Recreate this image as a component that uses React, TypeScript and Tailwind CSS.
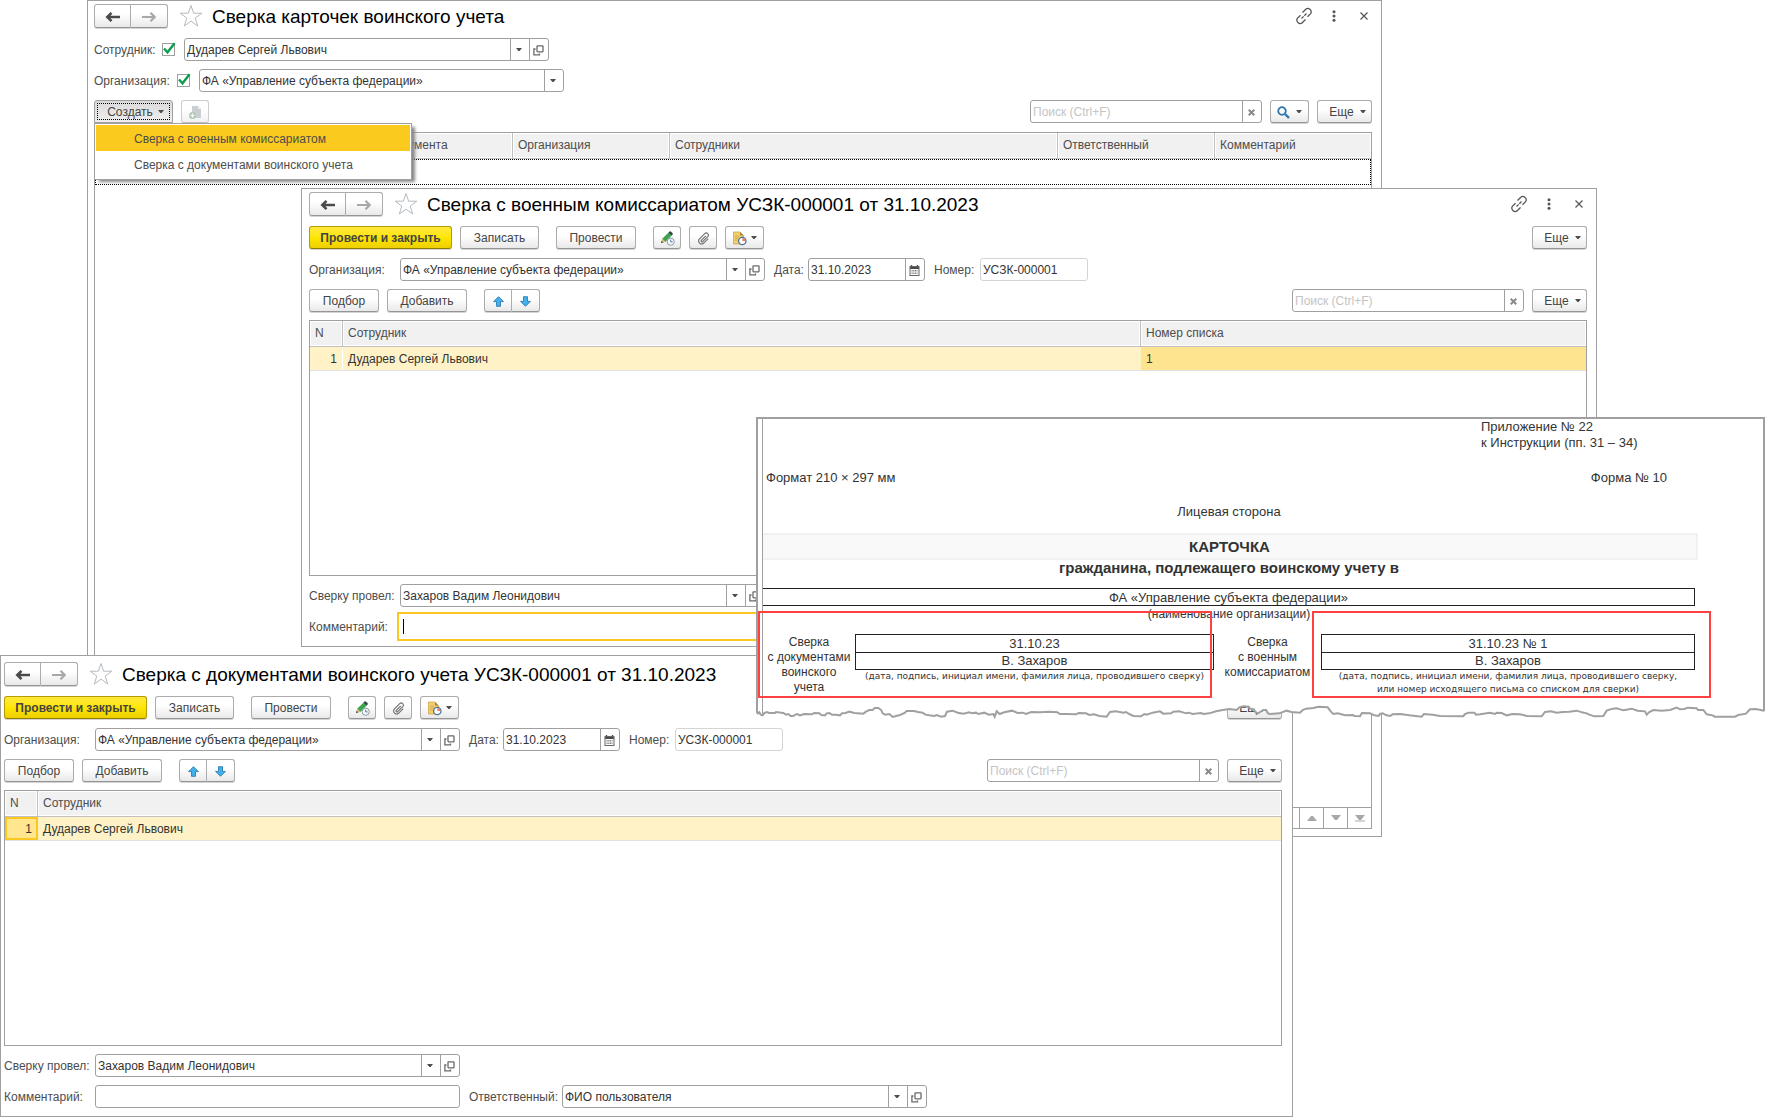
import type { ReactNode } from "react";
import clsx from "clsx";

/* ---------- icons ---------- */

const Caret = () => (
  <svg width="6" height="4" viewBox="0 0 6 4" className="shrink-0" aria-hidden="true">
    <path d="M0 0h6L3.6 3H2.4z" fill="#4d4d4d" />
  </svg>
);

const ArrowIcon = ({ back }: { back?: boolean }) => (
  <svg width="16" height="12" viewBox="0 0 16 12" aria-hidden="true">
    {back ? (
      <path d="M6.500 1.800 2.300 6l4.200 4.200M2.300 6H15" fill="none" stroke="#4a4a4a" strokeWidth="2.600" />
    ) : (
      <path d="M9.500 1.800 13.700 6l-4.200 4.200M13.700 6H1" fill="none" stroke="#a8a8a8" strokeWidth="2.200" />
    )}
  </svg>
);

const StarIcon = () => (
  <svg width="24" height="24" viewBox="0 0 24 24" className="shrink-0" aria-hidden="true">
    <path
      d="M12 1.500 14.600 9.200h8.200l-6.600 4.900 2.500 7.900L12 17.200 5.300 22l2.500-7.900-6.600-4.900h8.200z"
      fill="#fff"
      stroke="#b4bac0"
      strokeWidth="1"
    />
  </svg>
);

const LinkIcon = () => (
  <svg width="18" height="18" viewBox="0 0 18 18" fill="none" stroke="#555" strokeWidth="1.300" aria-hidden="true">
    <path d="M7.500 5.500 10.800 2.300a2.800 2.800 0 0 1 4 0l.6.600a2.800 2.800 0 0 1 0 4L12.500 9.800M10.500 12.500l-3.300 3.200a2.800 2.800 0 0 1-4 0l-.6-.6a2.800 2.800 0 0 1 0-4L5.500 8.200" />
    <path d="M6.500 11.500l5-5" strokeDasharray="3 1" />
  </svg>
);

const DotsIcon = () => (
  <svg width="4" height="12" viewBox="0 0 4 12" fill="#555" aria-hidden="true">
    <circle cx="2" cy="1.700" r="1.500" />
    <circle cx="2" cy="6" r="1.500" />
    <circle cx="2" cy="10.300" r="1.500" />
  </svg>
);

const CloseIcon = () => (
  <svg width="8" height="8" viewBox="0 0 8 8" stroke="#555" strokeWidth="1.200" aria-hidden="true">
    <path d="M.5.500l7 7M7.500.500l-7 7" />
  </svg>
);

const ClearIcon = () => (
  <svg width="7" height="7" viewBox="0 0 7 7" stroke="#8a8a8a" strokeWidth="2" aria-hidden="true">
    <path d="M.7.700l5.600 5.600M6.300.700.7 6.300" />
  </svg>
);

const OpenIcon = () => (
  <svg width="11" height="11" viewBox="0 0 11 11" fill="none" stroke="#6a6a6a" strokeWidth="1.300" aria-hidden="true">
    <rect x="4" y=".8" width="6" height="6" rx=".5" />
    <path d="M2.500 4H.9v5.800h5.600V8.400" />
  </svg>
);

const CalendarIcon = () => (
  <svg width="11" height="11" viewBox="0 0 11 11" aria-hidden="true">
    <path d="M1 1h9v3H1z" fill="#4a4a4a" />
    <path d="M2.500 0v2M8.500 0v2" stroke="#4a4a4a" strokeWidth="1.400" />
    <rect x="1" y="1.500" width="9" height="9" fill="none" stroke="#666" />
    <path d="M2.500 5.500h6M2.500 7h6M2.500 8.500h6" stroke="#777" strokeWidth=".9" strokeDasharray="1.200 .5" />
  </svg>
);

const SearchIcon = () => (
  <svg width="13" height="13" viewBox="0 0 13 13" fill="none" stroke="#2f78ad" aria-hidden="true">
    <circle cx="5" cy="5" r="3.800" strokeWidth="1.800" />
    <path d="M8 8l4 4" strokeWidth="2.400" />
  </svg>
);

const CopyIcon = () => (
  <svg width="15" height="15" viewBox="0 0 15 15" aria-hidden="true">
    <path d="M4 1h6l3 3v9H4z" fill="#a9b0b5" />
    <path d="M10 1v3h3z" fill="#dfe3e5" />
    <circle cx="4.500" cy="10.500" r="3.500" fill="#7da88a" />
    <path d="M4.500 8.500v4M2.500 10.500h4" stroke="#fff" strokeWidth="1.200" />
  </svg>
);

const PencilIcon = () => (
  <svg width="15" height="15" viewBox="0 0 15 15" aria-hidden="true">
    <path d="M1 12l1.500-4.500L8.300 1.700l3.200 3L5.500 10.800z" fill="#3da34c" />
    <path d="M8.300 1.700 9.600.6q.7-.5 1.300 0L12.600 2.300q.5.600 0 1.200L11.500 4.700z" fill="#2c4b3a" />
    <path d="M1 12l1.500-4.500 3 3.300z" fill="#e0b787" />
    <path d="M1 12l.7-2.100 1.400 1.400z" fill="#333" />
    <circle cx="10.700" cy="10.700" r="3.600" fill="#f4f8fb" stroke="#8a9bab" />
    <path d="M10.700 8.700v2.200h2" fill="none" stroke="#5a7a99" />
  </svg>
);

const ClipIcon = () => (
  <svg width="13" height="13" viewBox="0 0 13 13" fill="none" stroke="#707070" strokeWidth="1.100" aria-hidden="true">
    <path d="M8.800 3.800 4.300 8.300a1 1 0 0 0 1.400 1.400l5-5a2.100 2.100 0 0 0-3-3L2.300 7.100a3 3 0 0 0 4.200 4.200l4.700-4.700" />
  </svg>
);

const ReportIcon = () => (
  <svg width="15" height="15" viewBox="0 0 15 15" aria-hidden="true">
    <path d="M1.500 1h6.500l3.500 3.500V13h-10z" fill="#f2cf70" stroke="#cfa544" strokeWidth=".8" />
    <path d="M8 1v3.500h3.500z" fill="#a9853a" />
    <path d="M3 5h4M3 7h4M3 9h3" stroke="#c9a24a" strokeWidth=".8" />
    <circle cx="10.300" cy="10" r="3.700" fill="#fff" stroke="#4f749c" strokeWidth="1.300" />
    <path d="M10.300 7v3h3a3 3 0 0 0-3-3z" fill="#e6806a" />
  </svg>
);

const MoveIcon = ({ down }: { down?: boolean }) => (
  <svg width="11" height="11" viewBox="0 0 11 11" className={clsx(down && "rotate-180")} aria-hidden="true">
    <path d="M5.500.700 10.400 5.600H7.500v4.700h-4V5.600H.6z" fill="#43b0ee" stroke="#2b7db0" strokeWidth=".9" />
  </svg>
);

const ScrollIcon = ({ up, end }: { up?: boolean; end?: boolean }) => (
  <svg width="10" height="7" viewBox="0 0 10 7" fill="#a8a8a8" aria-hidden="true">
    {up ? <path d="M0 6h10L6 1H4z" /> : <path d="M0 0h10L6 5H4z" />}
    {end && <path d="M0 5.500h10v1H0z" />}
  </svg>
);

/* ---------- controls ---------- */

type BtnProps = { children: ReactNode; className?: string; label?: string; primary?: boolean };

const base = "flex shrink-0 items-center justify-center border pt-px text-[#444] shadow-[0_1px_0_#d4d4d4]";
const grey = "border-[#acacac] border-b-[#959595] bg-linear-to-b from-white from-40% to-[#e9e9e9]";
const yellow = "border-[#b39b00] border-b-[#8f7c00] bg-linear-to-b from-[#ffe838] via-[#ffe600] to-[#edcf00]";

const Btn = ({ children, className, label, primary }: BtnProps) => (
  <button type="button" aria-label={label} className={clsx(base, primary ? yellow : grey, "h-[23px] rounded-[3px]", className)}>
    {children}
  </button>
);

const MoreBtn = () => (
  <Btn className="w-[55px] gap-[6px] pl-[6px]">
    Еще <Caret />
  </Btn>
);

function WindowHeader({ title }: { title: string }) {
  return (
    <header className="flex h-6 items-center">
      <div className="flex">
        <button type="button" aria-label="Назад" className={clsx(base, grey, "h-6 w-[37px] rounded-l-[3px]")}>
          <ArrowIcon back />
        </button>
        <button type="button" aria-label="Вперед" className={clsx(base, grey, "h-6 w-[37px] rounded-r-[3px] border-l-0")}>
          <ArrowIcon />
        </button>
      </div>
      <button type="button" aria-label="В избранное" className="mr-[9px] ml-[11px]">
        <StarIcon />
      </button>
      <h1 className="pt-px text-[19px] leading-6 whitespace-nowrap text-black">{title}</h1>
      <div className="ml-auto flex items-center pr-1">
        <button type="button" aria-label="Ссылка" className="mr-[19px]">
          <LinkIcon />
        </button>
        <button type="button" aria-label="Меню окна" className="mr-[24px]">
          <DotsIcon />
        </button>
        <button type="button" aria-label="Закрыть">
          <CloseIcon />
        </button>
      </div>
    </header>
  );
}

type FieldProps = {
  id: string;
  value: string;
  className?: string;
  drop?: boolean;
  open?: boolean;
  calendar?: boolean;
  focused?: boolean;
  readOnly?: boolean;
};

const side = "flex w-[19px] shrink-0 items-center justify-center border-l border-[#a0a0a0] pt-px pr-[2px]";

function Field({ id, value, className, drop, open, calendar, focused, readOnly }: FieldProps) {
  return (
    <div
      className={clsx(
        "relative flex h-[23px] border bg-white",
        focused ? "border-white outline-2 outline-offset-1 outline-[#fac81e]" : "rounded-[3px]",
        !focused && (readOnly ? "border-[#d4d4d4]" : "border-[#a0a0a0]"),
        className,
      )}
    >
      <input id={id} defaultValue={value} readOnly={readOnly} className="w-full min-w-0 bg-transparent pt-[2px] pl-[2px] text-[#333] outline-none" />
      {focused && <span className="absolute top-[3px] left-[2px] h-[15px] w-px bg-black" />}
      {drop && (
        <button type="button" aria-label="Выбрать" className={side}>
          <Caret />
        </button>
      )}
      {open && (
        <button type="button" aria-label="Открыть" className={side}>
          <OpenIcon />
        </button>
      )}
      {calendar && (
        <button type="button" aria-label="Календарь" className={side}>
          <CalendarIcon />
        </button>
      )}
    </div>
  );
}

const Label = ({ id, children, className }: { id: string; children: ReactNode; className?: string }) => (
  <label htmlFor={id} className={clsx("shrink-0 pt-[2px] whitespace-nowrap", className)}>
    {children}
  </label>
);

const SearchBox = ({ id }: { id: string }) => (
  <div className="flex h-[23px] w-[232px] rounded-[3px] border border-[#a0a0a0] bg-white">
    <input id={id} aria-label="Поиск" placeholder="Поиск (Ctrl+F)" className="w-full min-w-0 pt-[2px] pl-[2px] outline-none placeholder:text-[#c4c4c4]" />
    <button type="button" aria-label="Очистить" className={side}>
      <ClearIcon />
    </button>
  </div>
);

const Check = ({ id, label }: { id: string; label: string }) => (
  <div className="relative mr-[9px] ml-[6px] h-[13px] w-[13px]">
    <input id={id} type="checkbox" aria-label={label} defaultChecked className="block h-[13px] w-[13px] appearance-none border border-[#a0a0a0] bg-white" />
    <svg width="13" height="13" viewBox="0 0 13 13" className="pointer-events-none absolute top-0 left-0 overflow-visible" aria-hidden="true">
      <path d="M2 5.500 5.500 9.300 12.600.300" fill="none" stroke="#0f9d4f" strokeWidth="2.400" />
    </svg>
  </div>
);

function HeadCell({ children }: { children?: ReactNode }) {
  return (
    <th className="h-[26px] border-b border-[#c0c0c0] p-px text-left font-normal not-last:border-r">
      <div className="flex h-[23px] items-center bg-[#f1f1f1] pl-1">{children}</div>
    </th>
  );
}

/* ---------- windows ---------- */

function ListWindow() {
  return (
    <section className="absolute top-0 right-[384px] left-[87px] flex h-[837px] flex-col border border-[#a0a0a0] bg-white pt-[3px] pr-[9px] pb-[7px] pl-[6px]">
      <WindowHeader title="Сверка карточек воинского учета" />

      <div className="mt-[10px] flex items-center">
        <Label id="list-emp" className="w-[62px]">Сотрудник:</Label>
        <Check id="list-emp-on" label="Отбор по сотруднику" />
        <Field id="list-emp" value="Дударев Сергей Львович" drop open className="w-[365px]" />
      </div>
      <div className="mt-2 flex items-center">
        <Label id="list-org" className="w-[77px]">Организация:</Label>
        <Check id="list-org-on" label="Отбор по организации" />
        <Field id="list-org" value="ФА «Управление субъекта федерации»" drop className="w-[365px]" />
      </div>

      <div className="mt-2 flex items-center gap-2">
        <div className="relative">
          <button
            type="button"
            aria-haspopup="menu"
            aria-expanded="true"
            className="flex h-[23px] w-[79px] items-center rounded-t-[3px] border border-[#a0a0a0] bg-linear-to-b from-[#dadada] to-[#efefef] p-[2px] text-[#444]"
          >
            <span className="flex h-full w-full items-center justify-center gap-[5px] border border-dotted border-black pt-px pl-1">
              Создать <Caret />
            </span>
          </button>
          <div
            role="menu"
            className="absolute top-[23px] left-0 z-10 w-[318px] border border-[#a0a0a0] bg-white p-px shadow-[4px_3px_3px_-1px_#888]"
          >
            <button type="button" role="menuitem" className="block h-[26px] w-full bg-[#facb1e] pt-[2px] pl-[38px] text-left">
              Сверка с военным комиссариатом
            </button>
            <button type="button" role="menuitem" className="block h-[27px] w-full pt-[2px] pl-[38px] text-left">
              Сверка с документами воинского учета
            </button>
          </div>
        </div>
        <Btn className="w-7 opacity-60" label="Скопировать">
          <CopyIcon />
        </Btn>
        <div className="ml-auto flex gap-2">
          <SearchBox id="list-search" />
          <Btn className="w-[39px] gap-[6px]" label="Найти">
            <SearchIcon />
            <Caret />
          </Btn>
          <MoreBtn />
        </div>
      </div>

      <div className="mt-[9px] flex-1 border border-[#a0a0a0]">
        <table className="w-full table-fixed border-separate border-spacing-0">
          <colgroup>
            <col className="w-[132px]" />
            <col className="w-[132px]" />
            <col className="w-[154px]" />
            <col className="w-[157px]" />
            <col />
            <col className="w-[157px]" />
            <col className="w-[156px]" />
          </colgroup>
          <thead>
            <tr>
              <HeadCell />
              <HeadCell />
              <HeadCell>Вид документа</HeadCell>
              <HeadCell>Организация</HeadCell>
              <HeadCell>Сотрудники</HeadCell>
              <HeadCell>Ответственный</HeadCell>
              <HeadCell>Комментарий</HeadCell>
            </tr>
          </thead>
          <tbody>
            <tr>
              <td colSpan={7} className="h-[26px] border border-dotted border-black" />
            </tr>
          </tbody>
        </table>
      </div>
      <div className="flex h-[21px] shrink-0 justify-end border border-t-0 border-[#a0a0a0]">
        {["Начало", "Вверх", "Вниз", "Конец"].map((name) => (
          <button key={name} type="button" aria-label={name} className="flex w-6 items-center justify-center border-l border-[#a0a0a0]">
            <ScrollIcon up={name === "Начало" || name === "Вверх"} end={name === "Конец"} />
          </button>
        ))}
      </div>
    </section>
  );
}

type DocWindowProps = {
  id: string;
  title: string;
  className: string;
  listNumber?: boolean;
  commentFocused?: boolean;
};

function DocWindow({ id, title, className, listNumber, commentFocused }: DocWindowProps) {
  return (
    <section className={clsx("absolute border border-[#a0a0a0] bg-white pb-2", className)}>
      <WindowHeader title={title} />

      <div className="mt-[10px] flex">
        <Btn primary className="w-[143px] font-bold">Провести и закрыть</Btn>
        <Btn className="ml-2 w-[79px]">Записать</Btn>
        <Btn className="ml-[17px] w-[80px]">Провести</Btn>
        <Btn className="ml-[17px] w-7" label="Редактировать">
          <PencilIcon />
        </Btn>
        <Btn className="ml-2 w-7" label="Файлы">
          <ClipIcon />
        </Btn>
        <Btn className="ml-2 w-[39px] gap-1" label="Отчеты">
          <ReportIcon />
          <Caret />
        </Btn>
        <div className="ml-auto">
          <MoreBtn />
        </div>
      </div>

      <div className="mt-[9px] flex items-center">
        <Label id={`${id}-org`} className="w-[91px]">Организация:</Label>
        <Field id={`${id}-org`} value="ФА «Управление субъекта федерации»" drop open className="w-[365px]" />
        <Label id={`${id}-date`} className="ml-[9px] w-[34px]">Дата:</Label>
        <Field id={`${id}-date`} value="31.10.2023" calendar className="w-[117px]" />
        <Label id={`${id}-num`} className="ml-[9px] w-[46px]">Номер:</Label>
        <Field id={`${id}-num`} value="УСЗК-000001" readOnly className="w-[108px]" />
      </div>

      <div className="mt-2 flex">
        <Btn className="w-[70px]">Подбор</Btn>
        <Btn className="ml-2 w-[80px]">Добавить</Btn>
        <button type="button" aria-label="Вверх" className={clsx(base, grey, "ml-[17px] h-[23px] w-[28px] rounded-l-[3px]")}>
          <MoveIcon />
        </button>
        <button type="button" aria-label="Вниз" className={clsx(base, grey, "h-[23px] w-[28px] rounded-r-[3px] border-l-0")}>
          <MoveIcon down />
        </button>
        <div className="ml-auto flex gap-2">
          <SearchBox id={`${id}-search`} />
          <MoreBtn />
        </div>
      </div>

      <div className="mt-2 h-[256px] border border-[#a0a0a0]">
        <table className="w-full table-fixed border-separate border-spacing-0">
          <colgroup>
            <col className="w-[33px]" />
            <col />
            {listNumber && <col className="w-[445px]" />}
          </colgroup>
          <thead>
            <tr>
              <HeadCell>N</HeadCell>
              <HeadCell>Сотрудник</HeadCell>
              {listNumber && <HeadCell>Номер списка</HeadCell>}
            </tr>
          </thead>
          <tbody className="text-[#333]">
            <tr className="bg-[#fff2c6]">
              <td
                className={clsx(
                  "h-[23px] text-right",
                  listNumber ? "border-r border-white pt-[2px] pr-[5px]" : "border-2 border-[#fac81e] bg-[#ffe68f] pt-px pr-1",
                )}
              >
                1
              </td>
              <td className="pt-[2px] pl-[5px]">Дударев Сергей Львович</td>
              {listNumber && <td className="bg-[#ffe48f] pt-[2px] pl-[5px]">1</td>}
            </tr>
          </tbody>
        </table>
        <div className="h-px bg-[#e2e2e2]" />
      </div>

      <div className="mt-2 flex items-center">
        <Label id={`${id}-by`} className="w-[91px]">Сверку провел:</Label>
        <Field id={`${id}-by`} value="Захаров Вадим Леонидович" drop open className="w-[365px]" />
      </div>
      <div className="mt-2 flex items-center">
        <Label id={`${id}-note`} className="w-[91px]">Комментарий:</Label>
        <Field id={`${id}-note`} value="" focused={commentFocused} className="w-[365px]" />
        <Label id={`${id}-resp`} className="ml-[9px] w-[93px]">Ответственный:</Label>
        <Field id={`${id}-resp`} value="ФИО пользователя" drop open className="w-[365px]" />
      </div>
    </section>
  );
}

/* ---------- printed card ---------- */

// torn paper edge, left to right
const TEAR =
  "0,22 6,28 10,25 14,32 20,34 24,28 32,24 40,27 57,27 60,24 82,27 90,32 97,30 104,36 112,36 118,32 124,30 132,34 144,30 167,31 175,27 190,28 196,33 207,34 212,28 220,27 228,32 240,32 252,34 258,28 268,27 280,23 295,27 322,29 330,23 340,18 350,18 356,12 367,12 376,19 380,28 388,32 400,30 410,39 420,36 432,33 446,27 452,21 474,21 486,24 500,26 508,32 520,34 535,36 542,33 556,38 567,36 573,23 590,20 605,26 622,29 640,25 648,28 660,26 667,30 685,26 698,32 712,30 716,38 722,22 731,30 745,25 768,20 785,27 800,26 810,30 826,24 852,25 880,23 904,25 912,30 930,30 960,31 968,27 990,28 1000,33 1014,31 1030,36 1052,38 1062,24 1080,22 1102,26 1110,24 1120,30 1132,36 1155,37 1165,30 1172,32 1190,26 1212,22 1222,29 1245,28 1252,23 1270,22 1290,28 1298,26 1310,30 1335,27 1342,30 1360,28 1380,22 1400,18 1420,15 1442,18 1450,10 1462,7 1478,8 1482,14 1494,16 1498,24 1506,28 1522,18 1530,18 1536,28 1542,30 1570,28 1592,20 1606,24 1632,26 1640,18 1650,14 1672,12 1687,8 1715,10 1724,22 1732,30 1745,28 1767,34 1790,33 1796,36 1812,37 1818,27 1842,28 1855,34 1868,36 1872,30 1880,28 1892,34 1902,36 1910,31 1932,30 1960,34 1997,38 2004,30 2030,32 2052,36 2122,37 2126,31 2137,26 2155,26 2160,32 2172,31 2202,26 2217,30 2222,26 2237,27 2252,34 2270,30 2292,31 2312,36 2357,37 2367,24 2385,22 2402,26 2420,24 2440,23 2462,20 2478,25 2492,28 2500,32 2515,37 2542,36 2552,20 2570,14 2582,13 2602,19 2627,14 2645,20 2667,22 2672,32 2680,24 2692,18 2717,20 2742,18 2762,11 2772,16 2785,15 2795,11 2822,13 2826,18 2842,18 2852,31 2870,34 2876,38 2892,38 2937,38 2947,33 2970,29 2982,16 3000,15 3024,20";

const RedFrame = ({ className }: { className: string }) => (
  <div className={clsx("pointer-events-none absolute -top-[23px] h-[87px] border-2 border-[#ff4040]", className)} />
);

function Signature({ date, children }: { date: string; children: ReactNode }) {
  return (
    <>
      <div className="border border-[#222] text-center text-[13px] leading-[17px]">
        <div className="border-b border-[#222]">{date}</div>
        <div className="leading-4">В. Захаров</div>
      </div>
      <div className="flex justify-center font-['DejaVu_Sans',sans-serif] text-[9px] leading-[13px] whitespace-nowrap">
        <p>{children}</p>
      </div>
    </>
  );
}

function PrintedCard() {
  return (
    <section className="absolute top-[417px] right-px left-[756px] text-[#333]">
      <div className="h-[287px] border-2 border-b-0 border-[#a0a0a0] bg-white pl-1">
        <div className="h-full border-l border-[#a0a0a0] pr-[68px] text-[13px] leading-[17px]">
          <div className="flex justify-end leading-4">
            <p className="w-[214px]">
              Приложение № 22
              <br />к Инструкции (пп. 31 – 34)
            </p>
          </div>
          <div className="mt-[18px] flex justify-between pr-[28px] pl-[3px]">
            <p>Формат 210 × 297 мм</p>
            <p>Форма № 10</p>
          </div>
          <p className="mt-[17px] text-center">Лицевая сторона</p>
          <h2 className="-mr-[3px] mt-[13px] h-[27px] border-2 border-l-0 border-[#f1f1f1] bg-[#f9f9f9] text-center text-[15px] leading-6 font-bold">
            КАРТОЧКА
          </h2>
          <p className="text-center text-[15px] leading-[15px] font-bold">гражданина, подлежащего воинскому учету в</p>
          <p className="mt-[13px] h-[18px] border border-l-0 border-[#222] text-center">ФА «Управление субъекта федерации»</p>
          <p className="pt-px text-center text-[12px] leading-[15px]">(наименование организации)</p>

          <div className="mt-[12px] grid grid-cols-[92px_359fr_107px_374fr] text-center text-[12px] leading-[15px]">
            <p className="pt-px whitespace-nowrap">
              Сверка
              <br />с документами
              <br />
              воинского
              <br />
              учета
            </p>
            <div className="relative">
              <Signature date="31.10.23">(дата, подпись, инициал имени, фамилия лица, проводившего сверку)</Signature>
              <RedFrame className="right-[2px] -left-[97px]" />
            </div>
            <p className="pt-px whitespace-nowrap">
              Сверка
              <br />с военным
              <br />
              комиссариатом
            </p>
            <div className="relative">
              <Signature date="31.10.23 № 1">
                (дата, подпись, инициал имени, фамилия лица, проводившего сверку,
                <br />
                или номер исходящего письма со списком для сверки)
              </Signature>
              <RedFrame className="-right-[16px] -left-[9px]" />
            </div>
          </div>
        </div>
      </div>
      <svg viewBox="0 0 3027 48" preserveAspectRatio="none" className="block h-4 w-full" aria-hidden="true">
        <polygon points={`0,0 ${TEAR} 3027,0`} fill="#fff" />
        <polyline points={TEAR} fill="none" stroke="#a0a0a0" strokeWidth="6" />
        <path d="M3 0v26M3024 0v22" stroke="#a0a0a0" strokeWidth="6" />
        <path d="M19.500 0v32" stroke="#a0a0a0" strokeWidth="3" />
      </svg>
    </section>
  );
}

export default function App() {
  return (
    <main className="relative min-h-screen overflow-hidden bg-white font-['Liberation_Sans',Arial,sans-serif] text-[12px] leading-[15px] text-[#4d4d4d]">
      <ListWindow />
      <DocWindow
        id="vk"
        title="Сверка с военным комиссариатом УСЗК-000001 от 31.10.2023"
        className="top-[188px] right-[169px] left-[301px] pt-[3px] pr-[9px] pl-[7px]"
        listNumber
        commentFocused
      />
      <DocWindow
        id="docs"
        title="Сверка с документами воинского учета УСЗК-000001 от 31.10.2023"
        className="top-[655px] right-[473px] left-0 pt-[6px] pr-[10px] pl-[3px]"
      />
      <PrintedCard />
    </main>
  );
}
